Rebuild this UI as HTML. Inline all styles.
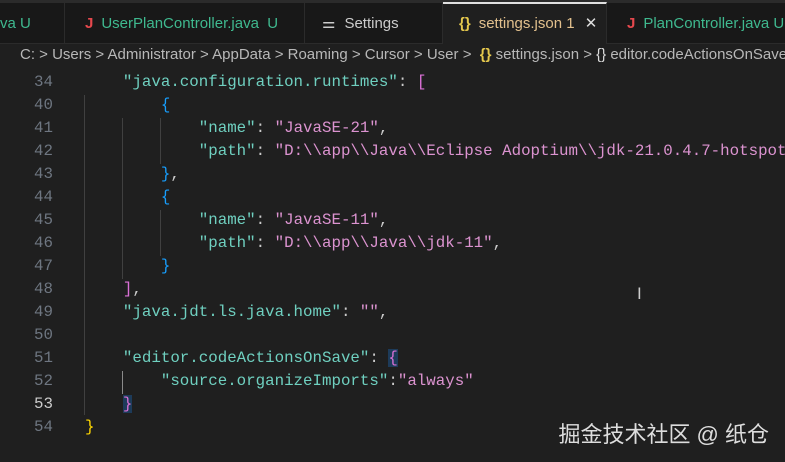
<!DOCTYPE html><html><head><style>
body{margin:0;width:785px;height:462px;overflow:hidden;background:#1f1f1f;font-family:"Liberation Sans",sans-serif;position:relative}
.tabs{position:absolute;top:0;left:0;width:785px;height:44px;background:#181818;border-top:3px solid #2b2b2b;box-sizing:border-box;border-bottom:1px solid #2b2b2b}
.tab{position:absolute;top:0;height:41px;line-height:41px;font-size:15px;border-right:1px solid #2b2b2b;box-sizing:border-box;white-space:nowrap;overflow:hidden}
.g{color:#3fb98f}.J{color:#e5484d;font-weight:bold;margin-right:8px}
.bc{position:absolute;top:46px;left:20px;font-size:15px;color:#b8b8b8;white-space:nowrap}
.code{position:absolute;left:0;top:71px;font-family:"Liberation Mono",monospace;font-size:15.8px;line-height:23px;white-space:pre}
.k{color:#6fd0c0}.s{color:#dc93d0}.p{color:#cccccc}.b1{color:#ffd700}.b2{color:#da70d6}.b3{color:#179fff}
.guide{position:absolute;width:1px;background:#404040}
</style></head><body>
<div class="tabs">
<div class="tab g" style="left:0;width:65px;padding-left:0">va U</div>
<div class="tab" style="left:65px;width:240px;padding-left:20px"><span class="J">J</span><span class="g">UserPlanController.java&nbsp; U</span></div>
<div class="tab" style="left:305px;width:138px;padding-left:17px;color:#ccc"><span style="color:#ccc;margin-right:9px">⚌</span>Settings</div>
<div class="tab" style="left:443px;width:164px;padding-left:16px;background:#1f1f1f;height:42px;border-top:2px solid #e0e0e0;line-height:39px;top:-1px;color:#e2c08d"><span style="color:#e5c84d;font-weight:bold;margin-right:8px">{}</span>settings.json 1 <span style="color:#ddd;margin-left:6px">✕</span></div>
<div class="tab" style="left:607px;width:178px;padding-left:20px;border:none"><span class="J">J</span><span class="g">PlanController.java U</span></div>
</div>
<div class="bc">C: &gt; Users &gt; Administrator &gt; AppData &gt; Roaming &gt; Cursor &gt; User &gt; &nbsp;<span style="color:#e5c84d;font-weight:bold">{}</span> settings.json &gt; <span style="color:#ddd">{}</span> editor.codeActionsOnSave</div>
<div class="guide" style="left:84px;top:95px;height:320px"></div>
<div class="guide" style="left:122px;top:118px;height:161px"></div>
<div class="guide" style="left:160px;top:118px;height:46px"></div>
<div class="guide" style="left:160px;top:210px;height:46px"></div>
<div class="guide" style="left:122px;top:371px;height:23px;background:#8a8a8a"></div>
<div class="code" style="left:85px"><span class="k">    "java.configuration.runtimes"</span><span class="p">: </span><span class="b2">[</span>
<span class="b3">        {</span>
<span class="k">            "name"</span><span class="p">: </span><span class="s">"JavaSE-21"</span><span class="p">,</span>
<span class="k">            "path"</span><span class="p">: </span><span class="s">"D:\\app\\Java\\Eclipse Adoptium\\jdk-21.0.4.7-hotspot"</span>
<span class="b3">        }</span><span class="p">,</span>
<span class="b3">        {</span>
<span class="k">            "name"</span><span class="p">: </span><span class="s">"JavaSE-11"</span><span class="p">,</span>
<span class="k">            "path"</span><span class="p">: </span><span class="s">"D:\\app\\Java\\jdk-11"</span><span class="p">,</span>
<span class="b3">        }</span>
<span class="b2">    ]</span><span class="p">,</span>
<span class="k">    "java.jdt.ls.java.home"</span><span class="p">: </span><span class="s">""</span><span class="p">,</span>

<span class="k">    "editor.codeActionsOnSave"</span><span class="p">: </span><span class="b2" style="background:#1d3b5a">{</span>
<span class="k">        "source.organizeImports"</span><span class="p">:</span><span class="s">"always"</span>
<span class="b2">    <span style="background:#1d3b5a">}</span></span>
<span class="b1">}</span></div>
<div class="code" style="left:0;width:53px;text-align:right;color:#6e7681">34
40
41
42
43
44
45
46
47
48
49
50
51
52
<span style="color:#ccc">53</span>
54</div>
<div style="position:absolute;left:637px;top:284px;color:#ccc;font-size:17px">I</div>
<div style="position:absolute;right:16px;top:417px;color:rgba(255,255,255,0.85);font-size:22px;font-family:'Liberation Sans','Noto Sans CJK SC',sans-serif">掘金技术社区 @ 纸仓</div>
</body></html>
